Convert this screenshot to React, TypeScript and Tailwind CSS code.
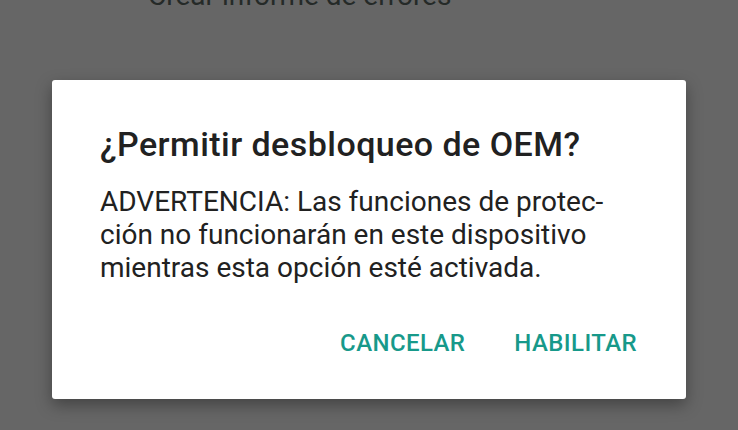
import React from 'react';

const App: React.FC = () => {
  return (
    <div className="h-[430px] w-[738px] overflow-hidden bg-[#666666] font-['Roboto',sans-serif]">
      {/* dimmed settings list behind the dialog */}
      <div className="-mt-[22px] pl-[148px] text-[28px] leading-[36px] text-[#252a28]">
        Crear informe de errores
      </div>

      <div className="ml-[52px] mt-[66px] h-[319px] w-[634px] rounded-[3px] bg-white shadow-[0_6px_16px_rgba(0,0,0,0.35)]">
        <div className="px-[48px] pt-[44px]">
          <h1 className="text-[34px] font-medium leading-[40px] tracking-[0.45px] text-[#212121]">
            ¿Permitir desbloqueo de OEM?
          </h1>
          <p className="mt-[21px] text-[28px] leading-[33px] text-[#212121]">
            ADVERTENCIA: Las funciones de protec-
            <br />
            ción no funcionarán en este dispositivo
            <br />
            mientras esta opción esté activada.
          </p>
        </div>
        <div className="mt-[44px] flex justify-end gap-[49px] pr-[49px]">
          <button className="text-[24px] font-medium leading-[30px] tracking-[0.4px] text-[#17998a]">CANCELAR</button>
          <button className="text-[24px] font-medium leading-[30px] tracking-[0.4px] text-[#17998a]">HABILITAR</button>
        </div>
      </div>
    </div>
  );
};

export default App;
